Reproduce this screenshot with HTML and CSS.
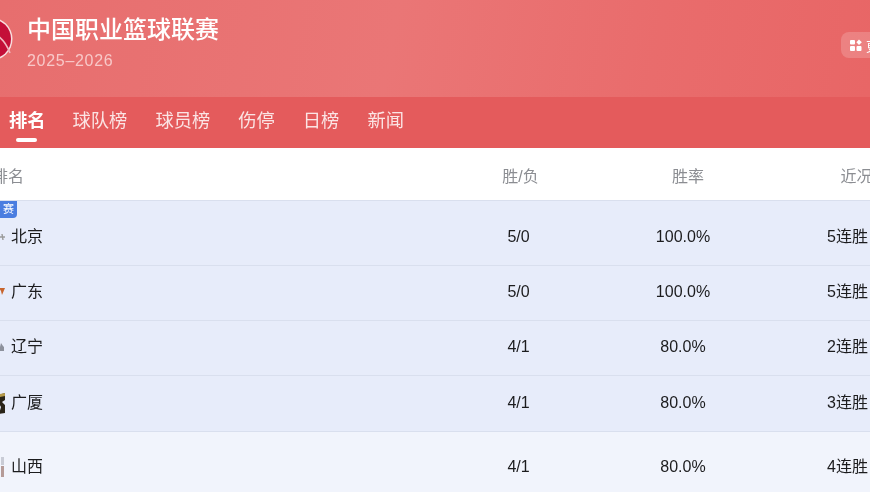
FILE: index.html
```
<!DOCTYPE html>
<html lang="zh">
<head>
<meta charset="utf-8">
<title>中国职业篮球联赛</title>
<link rel="stylesheet" href="styles.css">
</head>
<body>
<div class="page">
  <header class="hero">
    <svg class="logo" width="44" height="44" viewBox="0 0 44 44">
      <circle cx="22" cy="22" r="21.5" fill="#f8dede"/>
      <circle cx="22" cy="22" r="20" fill="#c40f38"/>
      <path d="M26 17 C33 21 38 28 41 36" fill="none" stroke="#f0b9c0" stroke-width="1.6"/>
    </svg>
    <div class="hero-text">
      <h1 class="title">中国职业篮球联赛</h1>
      <div class="season">2025–2026</div>
    </div>
    <div class="more">
      <svg width="12" height="12" viewBox="0 0 12 12"><rect x="0" y="1" width="5" height="4.5" rx="1" fill="#fff"/><path d="M9 0.5 L11.8 3.2 L9 6 L6.4 3.2 Z" fill="#fff"/><rect x="0" y="7" width="5" height="5" rx="1" fill="#fff"/><rect x="6.5" y="7" width="5" height="5" rx="1" fill="#fff"/></svg>
      <span>更多</span>
    </div>
  </header>
  <nav class="tabs">
    <span class="tab active">排名</span>
    <span class="tab">球队榜</span>
    <span class="tab">球员榜</span>
    <span class="tab">伤停</span>
    <span class="tab">日榜</span>
    <span class="tab">新闻</span>
  </nav>
  <div class="row head">
    <div class="name-head">排名</div>
    <div class="cell shift-w">胜/负</div>
    <div class="cell shift-a">胜率</div>
    <div class="cell shift-b">近况</div>
  </div>
  <div class="row team first">
    <span class="badge">赛</span>
    <div class="name"><svg class="crest" width="16" height="20" viewBox="0 0 16 20"><path d="M10 10h6M13 7l1 6" stroke="#9a9a9a" stroke-width="1.4" fill="none"/></svg>北京</div>
    <div class="cell">5/0</div><div class="cell">100.0%</div><div class="cell">5连胜</div>
  </div>
  <div class="row team">
    <div class="name"><svg class="crest" width="16" height="20" viewBox="0 0 16 20"><path d="M10 6h6l-3 7-1-4z" fill="#c8642c"/></svg>广东</div>
    <div class="cell">5/0</div><div class="cell">100.0%</div><div class="cell">5连胜</div>
  </div>
  <div class="row team">
    <div class="name"><svg class="crest" width="16" height="20" viewBox="0 0 16 20"><path d="M12 6l2 3 1 1v4h-5l1-4z" fill="#8d919c"/></svg>辽宁</div>
    <div class="cell">4/1</div><div class="cell">80.0%</div><div class="cell">2连胜</div>
  </div>
  <div class="row team tall">
    <div class="name"><svg class="crest" width="16" height="24" viewBox="0 0 16 24"><path d="M9 4l7-2v7l-3 2 3 3v8l-6 1 2-7-3-5z" fill="#2a2418"/><path d="M11 3l5-1v3l-5 1z" fill="#b59a4a"/></svg>广厦</div>
    <div class="cell">4/1</div><div class="cell">80.0%</div><div class="cell">3连胜</div>
  </div>
  <div class="row team last">
    <div class="name"><svg class="crest" width="16" height="26" viewBox="0 0 16 26"><path d="M12 3h3v8h-3z" fill="#c9ccd6"/><path d="M12 12h3v11h-3z" fill="#b59b98"/></svg>山西</div>
    <div class="cell">4/1</div><div class="cell">80.0%</div><div class="cell">4连胜</div>
  </div>
</div>
</body>
</html>
```
FILE: styles.css
```
* { box-sizing: border-box; }
html, body { margin: 0; padding: 0; }
body {
  width: 870px;
  height: 492px;
  overflow: hidden;
  background: #f1f4fc;
  font-family: "Liberation Sans", "Noto Sans CJK SC", sans-serif;
  color: #1c1c1e;
}
.page { width: 870px; height: 492px; overflow: hidden; filter: blur(0.4px); }
.hero {
  height: 97px;
  display: flex;
  align-items: flex-start;
  padding-top: 17px;
  background: linear-gradient(100deg, #e76e6e 0%, #ea7676 45%, #e96c6c 75%, #e86666 100%);
}
.logo { flex: none; margin-left: -31px; }
.hero-text { margin-left: 14px; margin-top: -1px; color: #fff; flex: 1; }
.title { margin: 0; font-size: 24px; line-height: 27px; font-weight: 500; }
.season { margin-top: 8px; font-size: 16px; line-height: 19px; letter-spacing: 0.7px; color: #f8c8c8; }
.more {
  flex: none;
  width: 60px;
  height: 26px;
  margin: 15px -31px 0 0;
  padding-left: 9px;
  display: flex;
  align-items: center;
  gap: 4px;
  border-radius: 8px;
  background: rgba(255, 255, 255, .18);
  color: #fff;
  font-size: 13px;
}
.tabs {
  height: 51px;
  display: flex;
  gap: 28px;
  padding: 12px 0 0 8px;
  background: #e45b5c;
  color: #fbe4e4;
  font-size: 18.3px;
  line-height: 24px;
}
.tab { position: relative; }
.tab.active { color: #fff; font-weight: 700; margin-left: 1px; margin-right: -1px; }
.tab.active::after {
  content: "";
  position: absolute;
  left: 7px;
  top: 29px;
  width: 21px;
  height: 4px;
  border-radius: 2px;
  background: #fff;
}
.row {
  position: relative;
  display: grid;
  grid-template-columns: 404px 100px 100px 100px;
  column-gap: 64.5px;
  align-items: center;
  width: 900px;
  font-size: 16px;
  line-height: 22px;
}
.head { height: 52px; background: #fff; color: #8b8d92; padding-top: 5px; }
.name-head { margin-left: -8px; }
.cell { text-align: center; }
.shift-w { padding-left: 4px; }
.shift-a { padding-left: 10px; }
.shift-b { padding-left: 18px; }
.team {
  height: 55px;
  padding-bottom: 2px;
  background: #e7ecfa;
  border-bottom: 1px solid #d9dfee;
}
.first { height: 66px; padding-top: 9px; border-top: 1px solid #d9dfee; }
.tall { height: 56px; }
.last { height: 70px; padding-bottom: 0; background: #f1f4fc; border-bottom: 0; }
.name { display: flex; align-items: center; gap: 6px; margin-left: -11px; }
.crest { flex: none; }
.badge {
  position: absolute;
  left: 0;
  top: 0;
  width: 17px;
  height: 17px;
  border-radius: 0 0 4px 0;
  background: #4a7de0;
  color: #fff;
  font-size: 11px;
  line-height: 17px;
  text-align: center;
}
```
